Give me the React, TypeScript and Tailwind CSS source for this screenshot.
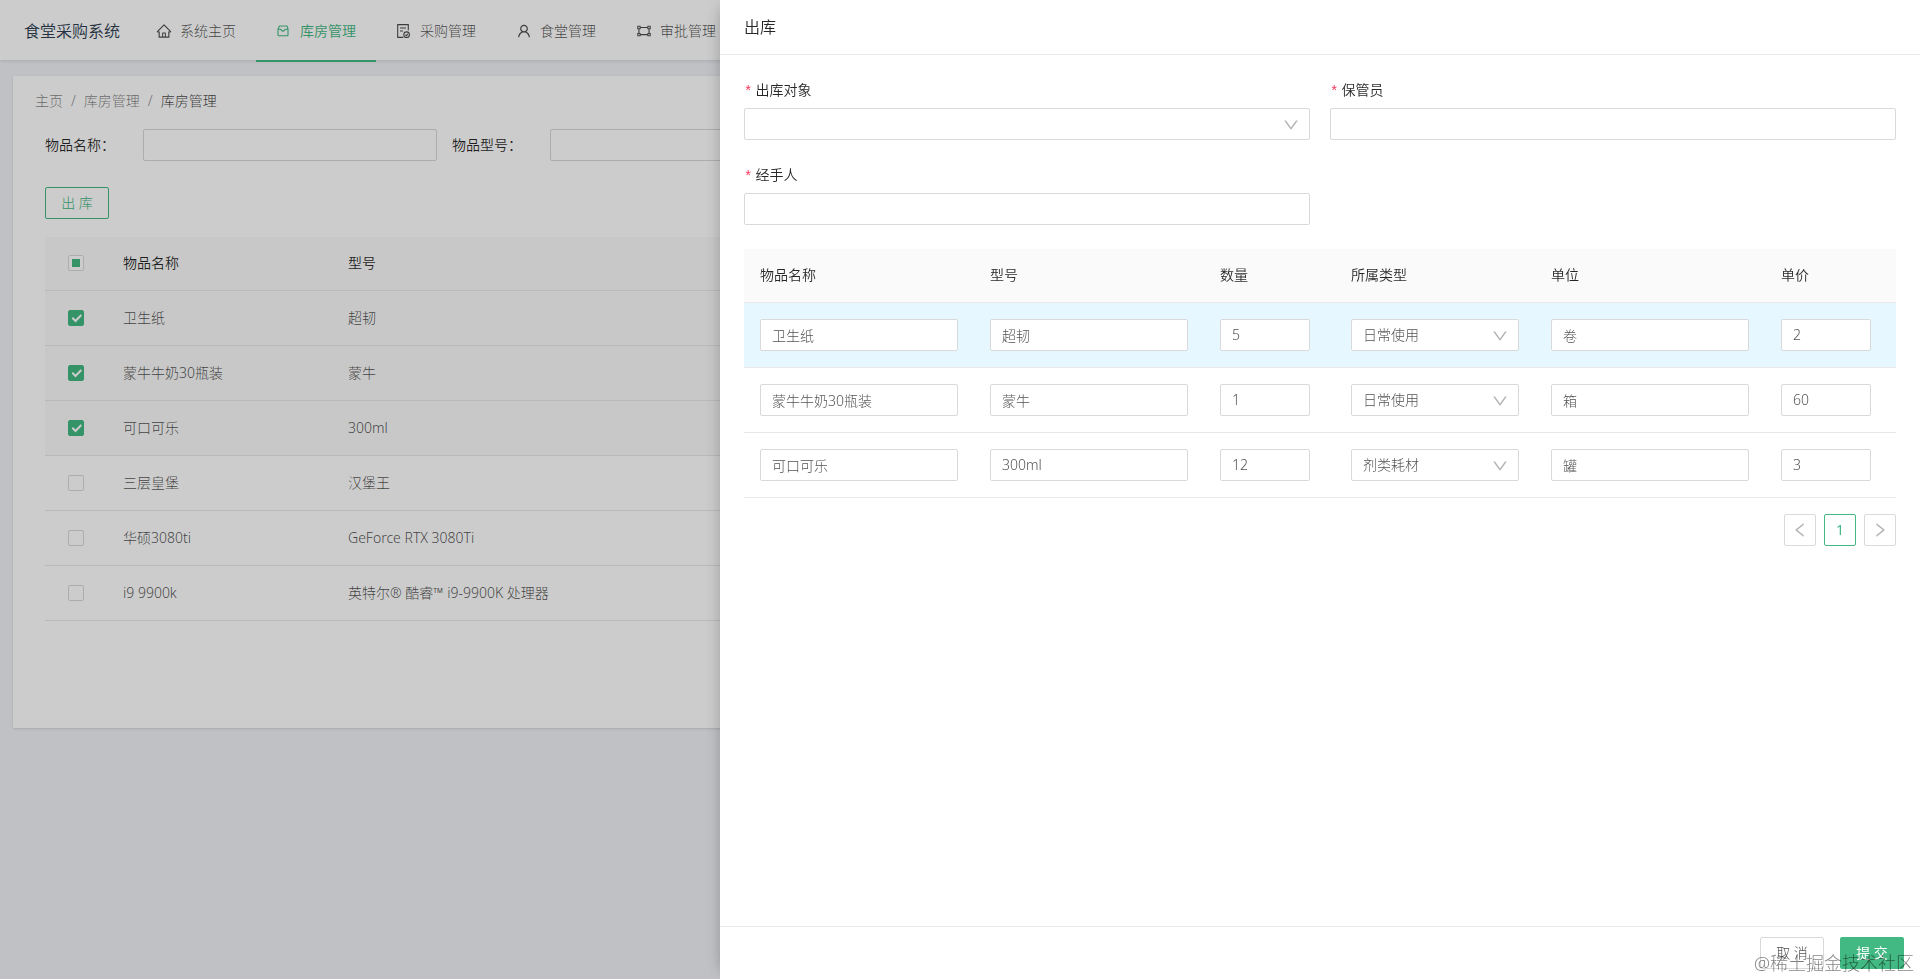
import { useState } from "react";
import { clsx } from "clsx";
import {
    AiOutlineDown,
    AiOutlineGateway,
    AiOutlineHome,
    AiOutlineLeft,
    AiOutlineRight,
    AiOutlineUser,
} from "react-icons/ai";

function StoreIcon() {
    return (
        <svg width="16" height="16" viewBox="0 0 16 16" fill="none" stroke="currentColor" strokeWidth="1.1">
            <path d="M4 3h6.6a.8.8 0 0 1 .8.6l.6 2.8V12a.8.8 0 0 1-.8.8H2.8A.8.8 0 0 1 2 12V6.4l1.1-2.8a.8.8 0 0 1 .9-.6z" />
            <path d="M2 6.2h2.8c.2 1.3 1 1.9 2.2 1.9s2-.6 2.2-1.9H12" />
        </svg>
    );
}

function PurchaseIcon() {
    return (
        <svg width="16" height="16" viewBox="0 0 16 16" fill="none" stroke="currentColor" strokeWidth="1.1">
            <path d="M12.3 7.2V1.6H1.7v12.8h5.6" />
            <path d="M4 5h6M4 8h3" />
            <circle cx="10.6" cy="11.7" r="2.8" />
            <path d="M9.4 11.8l1 .9 1.5-1.8" />
        </svg>
    );
}

const menus = [
    { name: "系统主页", icon: <AiOutlineHome className="size-4" /> },
    { name: "库房管理", icon: <StoreIcon />, active: true },
    { name: "采购管理", icon: <PurchaseIcon /> },
    { name: "食堂管理", icon: <AiOutlineUser className="size-4" /> },
    { name: "审批管理", icon: <AiOutlineGateway className="size-4" /> },
];

const goods = [
    { name: "卫生纸", model: "超韧" },
    { name: "蒙牛牛奶30瓶装", model: "蒙牛" },
    { name: "可口可乐", model: "300ml" },
    { name: "三层皇堡", model: "汉堡王" },
    { name: "华硕3080ti", model: "GeForce RTX 3080Ti" },
    { name: "i9 9900k", model: "英特尔® 酷睿™ i9-9900K 处理器" },
];

const outList = [
    { name: "卫生纸", model: "超韧", count: "5", type: "日常使用", unit: "卷", price: "2" },
    { name: "蒙牛牛奶30瓶装", model: "蒙牛", count: "1", type: "日常使用", unit: "箱", price: "60" },
    { name: "可口可乐", model: "300ml", count: "12", type: "剂类耗材", unit: "罐", price: "3" },
];

const inputClass =
    "h-8 rounded-[2px] border border-[#d9d9d9] bg-white px-[11px] text-sm text-black/70 outline-none focus:border-[#42b983]";

function Check({ checked, half, label, onChange }: { checked: boolean; half?: boolean; label: string; onChange: () => void }) {
    return (
        <label className="relative mx-auto block size-4">
            <input
                type="checkbox"
                aria-label={label}
                checked={checked}
                onChange={onChange}
                className="block size-4 appearance-none rounded-[2px] border border-[#d9d9d9] bg-white checked:border-[#42b983] checked:bg-[#42b983]"
            />
            {checked && (
                <svg className="pointer-events-none absolute inset-0" viewBox="0 0 16 16" fill="none" stroke="#fff" strokeWidth="2">
                    <path d="M4.3 7.8l3.2 3.2 5.8-6" />
                </svg>
            )}
            {half && <span className="pointer-events-none absolute inset-1 bg-[#42b983]" />}
        </label>
    );
}

function Select({ id, label, options }: { id?: string; label?: string; options: string[] }) {
    return (
        <div className="relative">
            <select id={id} aria-label={label} className={clsx(inputClass, "block w-full appearance-none")}>
                {options.map((item) => (
                    <option key={item}>{item}</option>
                ))}
            </select>
            <AiOutlineDown className="pointer-events-none absolute top-2 right-2.5 size-4.5 text-black/30" />
        </div>
    );
}

function RequiredLabel({ id, text }: { id: string; text: string }) {
    return (
        <label htmlFor={id} className="mb-2 flex h-[21px] gap-[3px] leading-[21px] font-[350] text-black/85">
            <span className="pt-[3px] font-['Liberation_Mono',monospace] text-[#f5355b]">*</span>
            {text}
        </label>
    );
}

function Page() {
    const [selected, setSelected] = useState([0, 1, 2]);

    const toggle = (i: number) => {
        setSelected(selected.includes(i) ? selected.filter((s) => s !== i) : [...selected, i]);
    };

    const all = selected.length === goods.length;

    return (
        <div className="flex-1">
            <header className="flex h-[60px] items-start bg-white pl-6 shadow-[0_1px_4px_rgba(0,21,41,0.12)]">
                <h1 className="w-28 text-base leading-[62px] font-[350] text-[#2c3e50]">食堂采购系统</h1>
                <nav className="flex">
                    {menus.map((item) => (
                        <a
                            key={item.name}
                            href="#"
                            className={clsx(
                                "flex h-[62px] w-[120px] items-center justify-center gap-2",
                                item.active ? "font-[350] text-[#42b983] shadow-[inset_0_-2px_0_#42b983]" : "text-black/70"
                            )}
                        >
                            {item.icon}
                            {item.name}
                        </a>
                    ))}
                </nav>
            </header>

            <main className="mx-[13px] mt-4 min-h-[652px] bg-white px-8 pt-3.5 shadow-sm">
                <nav className="-ml-2.5 flex gap-2 leading-[21px] text-black/50">
                    <a href="#">主页</a>
                    <span>/</span>
                    <a href="#">库房管理</a>
                    <span>/</span>
                    <span className="text-black/75">库房管理</span>
                </nav>

                <div className="mt-[18px] flex gap-[15px]">
                    <div className="flex items-center">
                        <label htmlFor="name" className="w-[98px] font-[350] text-black/85">物品名称：</label>
                        <input id="name" className={clsx(inputClass, "w-[294px]")} />
                    </div>
                    <div className="flex items-center">
                        <label htmlFor="model" className="w-[98px] font-[350] text-black/85">物品型号：</label>
                        <input id="model" className={clsx(inputClass, "w-[294px]")} />
                    </div>
                </div>

                <button className="mt-[26px] h-8 w-16 rounded-[2px] border border-[#42b983] bg-white text-[#42b983]">出 库</button>

                <table className="mt-[18px] w-full table-fixed text-left">
                    <colgroup>
                        <col className="w-[62px]" />
                        <col className="w-[225px]" />
                        <col />
                    </colgroup>
                    <thead>
                        <tr className="h-[53px] border-b border-[#e8e8e8] bg-[#fafafa] text-black/85">
                            <th>
                                <Check
                                    label="全选"
                                    checked={all}
                                    half={!all && selected.length > 0}
                                    onChange={() => setSelected(all ? [] : goods.map((_, i) => i))}
                                />
                            </th>
                            <th className="px-4 font-[350]">物品名称</th>
                            <th className="px-4 font-[350]">型号</th>
                        </tr>
                    </thead>
                    <tbody>
                        {goods.map((item, i) => (
                            <tr
                                key={item.name}
                                className={clsx("h-[55px] border-b border-[#e8e8e8] text-black/70", selected.includes(i) && "bg-[#fafafa]")}
                            >
                                <td>
                                    <Check label={item.name} checked={selected.includes(i)} onChange={() => toggle(i)} />
                                </td>
                                <td className="px-4">{item.name}</td>
                                <td className="px-4">{item.model}</td>
                            </tr>
                        ))}
                    </tbody>
                </table>
            </main>
        </div>
    );
}

function OutDrawer() {
    return (
        <aside className="fixed inset-y-0 right-0 flex w-5/8 flex-col bg-white shadow-[-6px_0_16px_-8px_rgba(0,0,0,0.3)]">
            <h2 className="border-b border-[#e8e8e8] px-6 py-4 text-base leading-[22px] font-[350] text-black/85">出库</h2>

            <div className="flex-1 overflow-auto p-6">
                <form className="grid grid-cols-2 gap-x-5 gap-y-6">
                    <div>
                        <RequiredLabel id="target" text="出库对象" />
                        <Select id="target" options={[""]} />
                    </div>
                    <div>
                        <RequiredLabel id="keeper" text="保管员" />
                        <input id="keeper" className={clsx(inputClass, "block w-full")} />
                    </div>
                    <div>
                        <RequiredLabel id="handler" text="经手人" />
                        <input id="handler" className={clsx(inputClass, "block w-full")} />
                    </div>
                </form>

                <table className="mt-6 w-full table-fixed text-left">
                    <colgroup>
                        <col className="w-[230px]" />
                        <col className="w-[230px]" />
                        <col className="w-[131px]" />
                        <col className="w-[200px]" />
                        <col className="w-[230px]" />
                        <col className="w-[131px]" />
                    </colgroup>
                    <thead>
                        <tr className="h-[53px] border-b border-[#e8e8e8] bg-[#fafafa] text-black/85">
                            <th className="px-4 font-[350]">物品名称</th>
                            <th className="px-4 font-[350]">型号</th>
                            <th className="px-4 font-[350]">数量</th>
                            <th className="px-4 font-[350]">所属类型</th>
                            <th className="px-4 font-[350]">单位</th>
                            <th className="px-4 font-[350]">单价</th>
                        </tr>
                    </thead>
                    <tbody>
                        {outList.map((item, i) => (
                            <tr key={item.name} className={clsx("h-[65px] border-b border-[#e8e8e8]", i === 0 && "bg-[#e6f7ff]")}>
                                <td className="px-4">
                                    <input aria-label="物品名称" defaultValue={item.name} className={clsx(inputClass, "block w-full")} />
                                </td>
                                <td className="px-4">
                                    <input aria-label="型号" defaultValue={item.model} className={clsx(inputClass, "block w-full")} />
                                </td>
                                <td className="px-4">
                                    <input aria-label="数量" defaultValue={item.count} className={clsx(inputClass, "block w-[90px]")} />
                                </td>
                                <td className="px-4">
                                    <Select label="所属类型" options={[item.type]} />
                                </td>
                                <td className="px-4">
                                    <input aria-label="单位" defaultValue={item.unit} className={clsx(inputClass, "block w-full")} />
                                </td>
                                <td className="px-4">
                                    <input aria-label="单价" defaultValue={item.price} className={clsx(inputClass, "block w-[90px]")} />
                                </td>
                            </tr>
                        ))}
                    </tbody>
                </table>

                <div className="mt-4 flex justify-end gap-2">
                    <button aria-label="上一页" className="flex size-8 items-center justify-center rounded-[2px] border border-[#d9d9d9] text-black/30">
                        <AiOutlineLeft className="size-4.5" />
                    </button>
                    <button className="size-8 rounded-[2px] border border-[#42b983] font-normal text-[#42b983]">1</button>
                    <button aria-label="下一页" className="flex size-8 items-center justify-center rounded-[2px] border border-[#d9d9d9] text-black/30">
                        <AiOutlineRight className="size-4.5" />
                    </button>
                </div>
            </div>

            <footer className="flex justify-end gap-4 border-t border-[#e8e8e8] px-4 py-2.5">
                <button className="h-8 w-16 rounded-[2px] border border-[#d9d9d9] text-black/70">取 消</button>
                <button className="h-8 w-16 rounded-[2px] bg-[#42b983] font-normal text-white">提 交</button>
            </footer>
        </aside>
    );
}

export default function App() {
    return (
        <div className="flex min-h-screen bg-[#f0f2f7] font-['Noto_Sans','Noto_Sans_CJK_SC',sans-serif] text-sm font-light">
            <Page />
            <div className="fixed inset-0 bg-black/20" />
            <OutDrawer />
            <span className="pointer-events-none fixed right-1.5 bottom-0.5 text-lg text-black/50">@稀土掘金技术社区</span>
        </div>
    );
}
